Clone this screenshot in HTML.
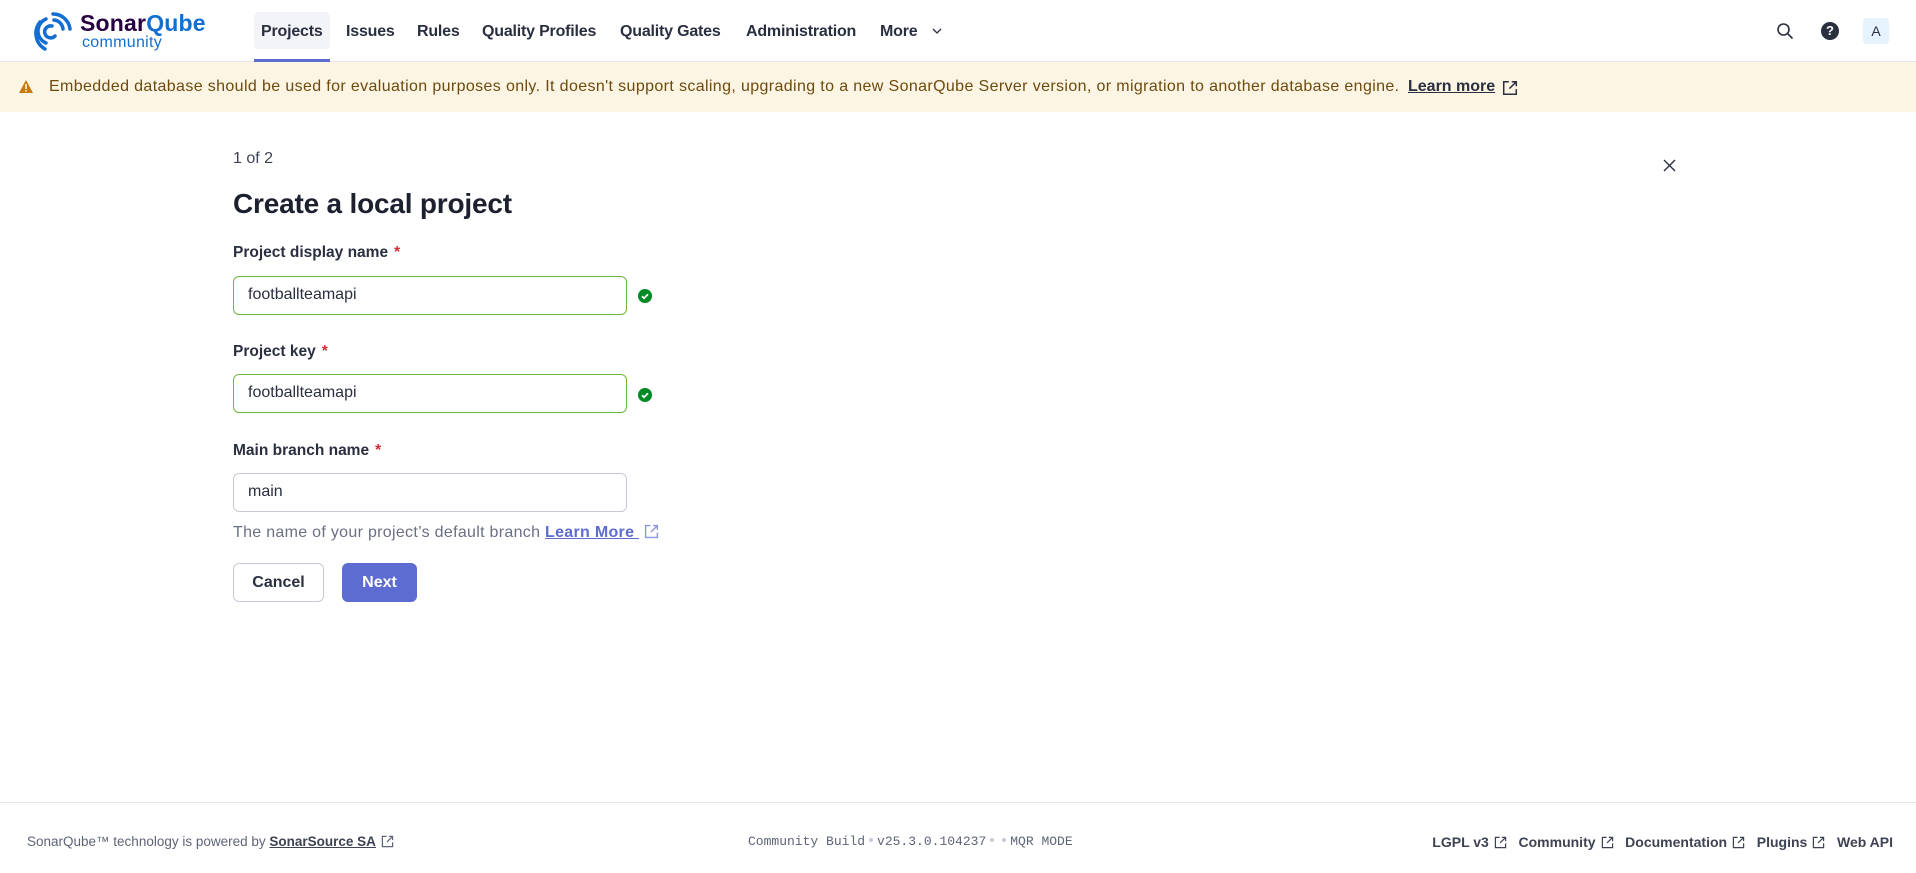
<!DOCTYPE html>
<html><head><meta charset="utf-8"><style>
*{box-sizing:border-box;margin:0;padding:0}
body{width:1916px;height:873px;position:relative;background:#fff;font-family:"Liberation Sans",sans-serif;color:#2a2f40;overflow:hidden}
.abs{position:absolute}
.nav{position:absolute;top:23px;font-size:16px;font-weight:bold;color:#2a2f40;letter-spacing:-0.2px}
.hdr{position:absolute;left:0;top:0;width:1916px;height:62px;border-bottom:1px solid #e1e6f0}
.banner{position:absolute;left:0;top:62px;width:1916px;height:50px;background:#fcf5e4}
.lbl{position:absolute;left:233px;font-size:15.5px;font-weight:bold;color:#2a2f40}
.lbl span{color:#d02f3a;margin-left:6px}
.inp{position:absolute;left:233px;width:394px;height:39px;border:1px solid #6cb83a;border-radius:6px;font-size:16px;padding:9px 0 0 14px;color:#2a2f40}
.chk{position:absolute;left:638px;width:14px;height:14px;border-radius:50%;background:#008a25}
.foot{position:absolute;top:834px;font-size:13.5px;color:#5d6476}
.ext{display:inline-block;width:13px;height:13px;vertical-align:-2px;margin-left:5px}
.dot{display:inline-block;width:4px;height:4px;border-radius:50%;background:#c7cbd9;vertical-align:3px;margin:0 4px}
</style></head><body>
<svg width="0" height="0" style="position:absolute"><defs><symbol id="ex" viewBox="0 0 14 14"><path d="M6 1.5H1.5v11h11V8M8.5 1.5h4v4M12.5 1.5L6.5 7.5" fill="none" stroke="currentColor" stroke-width="1.3"/></symbol></defs></svg>
<div class="hdr"></div>
<svg class="abs" style="left:33px;top:10px" width="42" height="42" viewBox="0 0 42 42" fill="none" stroke="#126ed3" stroke-width="3.5" stroke-linecap="round">
<path d="M19 16a6 6 0 1 0 3 10"/><path d="M13 9a13 13 0 0 0 0 24"/><path d="M7 12a18 18 0 0 0 5 27"/><path d="M20 4a17 17 0 0 1 17 15"/><path d="M21 10a10 10 0 0 1 9 9"/>
</svg>
<div class="abs" style="left:80px;top:10px;font-size:23px;font-weight:bold;letter-spacing:0.2px"><span style="color:#290042">Sonar</span><span style="color:#126ed3">Qube</span></div>
<div class="abs" style="left:82px;top:34px;font-size:16px;color:#126ed3;letter-spacing:0.3px">community</div>
<div class="abs" style="left:254px;top:12px;width:76px;height:37px;background:#f3f4f8;border-radius:4px"></div>
<div class="abs" style="left:254px;top:59px;width:76px;height:3px;background:#5d6cd0"></div>
<div class="nav" style="left:261px">Projects</div>
<div class="nav" style="left:346px">Issues</div>
<div class="nav" style="left:417px">Rules</div>
<div class="nav" style="left:482px">Quality Profiles</div>
<div class="nav" style="left:620px">Quality Gates</div>
<div class="nav" style="left:746px">Administration</div>
<div class="nav" style="left:880px">More</div>
<svg class="abs" style="left:931px;top:27px" width="12" height="8" viewBox="0 0 12 8"><path d="M2 2l4 4 4-4" stroke="#2a2f40" stroke-width="1.3" fill="none"/></svg>
<svg class="abs" style="left:1776px;top:22px" width="18" height="18" viewBox="0 0 18 18" fill="none" stroke="#2a2f40" stroke-width="1.6"><circle cx="7.5" cy="7.5" r="5.5"/><path d="M11.5 11.5l5 5"/></svg>
<div class="abs" style="left:1821px;top:22px;width:18px;height:18px;border-radius:50%;background:#2a2f40;color:#fff;font-size:13px;font-weight:bold;text-align:center;line-height:18px">?</div>
<div class="abs" style="left:1863px;top:18px;width:26px;height:26px;border-radius:4px;background:#e6f2fc;font-size:14px;text-align:center;line-height:26px;color:#2a2f40">A</div>
<div class="banner"></div>
<svg class="abs" style="left:18px;top:79px" width="16" height="15" viewBox="0 0 16 15"><path d="M8 1L15 14H1z" fill="#c47b0c"/><rect x="7.2" y="5" width="1.6" height="5" fill="#fcf5e4"/><rect x="7.2" y="11" width="1.6" height="1.6" fill="#fcf5e4"/></svg>
<div class="abs" style="left:49px;top:78px;font-size:16px;color:#6e4a0d;white-space:nowrap;letter-spacing:0.37px">Embedded database should be used for evaluation purposes only. It doesn't support scaling, upgrading to a new SonarQube Server version, or migration to another database engine.</div>
<div class="abs" style="left:1408px;top:78px;font-size:16px;font-weight:bold;color:#2a2f40;text-decoration:underline">Learn more</div>
<svg class="abs" style="left:1502px;top:80px;color:#2a2f40" width="16" height="16"><use href="#ex"/></svg>
<svg class="abs" style="left:1663px;top:159px" width="13" height="13" viewBox="0 0 13 13"><path d="M1 1l11 11M12 1L1 12" stroke="#2a2f40" stroke-width="1.4"/></svg>
<div class="abs" style="left:233px;top:150px;font-size:16px;color:#3e4354">1 of 2</div>
<div class="abs" style="left:233px;top:188px;font-size:28px;font-weight:bold;color:#1d212f;letter-spacing:-0.2px">Create a local project</div>
<div class="lbl" style="top:244px">Project display name<span>*</span></div>
<div class="inp" style="top:276px">footballteamapi</div>
<div class="chk" style="top:289px"><svg width="14" height="14" viewBox="0 0 14 14"><path d="M4 7.2l2 2 4-4" stroke="#fff" stroke-width="1.8" fill="none"/></svg></div>
<div class="lbl" style="top:343px">Project key<span>*</span></div>
<div class="inp" style="top:374px">footballteamapi</div>
<div class="chk" style="top:388px"><svg width="14" height="14" viewBox="0 0 14 14"><path d="M4 7.2l2 2 4-4" stroke="#fff" stroke-width="1.8" fill="none"/></svg></div>
<div class="lbl" style="top:442px">Main branch name<span>*</span></div>
<div class="inp" style="top:473px;border-color:#c7cbd9">main</div>
<div class="abs" style="left:233px;top:524px;font-size:16px;color:#6a7083;white-space:nowrap;letter-spacing:0.3px">The name of your project’s default branch <span style="color:#5d6cd0;font-weight:bold;text-decoration:underline">Learn More <svg class="ext" style="color:#8c96e0;width:15px;height:15px"><use href="#ex"/></svg></span></div>
<div class="abs" style="left:233px;top:563px;width:91px;height:39px;border:1px solid #c7cbd9;border-radius:6px;font-size:16px;font-weight:bold;text-align:center;line-height:37px;color:#2a2f40">Cancel</div>
<div class="abs" style="left:342px;top:563px;width:75px;height:39px;background:#5d6cd0;border-radius:6px;font-size:16px;font-weight:bold;text-align:center;line-height:39px;color:#fff">Next</div>
<div class="abs" style="left:0;top:802px;width:1916px;height:1px;background:#e5e7ee"></div>
<div class="foot" style="left:27px">SonarQube™ technology is powered by <span style="font-weight:bold;color:#3e4354;text-decoration:underline">SonarSource SA</span><svg class="ext"><use href="#ex"/></svg></div>
<div class="foot" style="left:748px;font-family:'Liberation Mono',monospace;font-size:13px;color:#5d6476;white-space:nowrap">Community Build<span class="dot"></span>v25.3.0.104237<span class="dot"></span><span class="dot"></span>MQR MODE</div>
<div class="foot" style="right:23px;font-weight:bold;color:#3e4354;white-space:nowrap;font-size:14px">LGPL v3<svg class="ext"><use href="#ex"/></svg>&nbsp;&nbsp;&nbsp;Community<svg class="ext"><use href="#ex"/></svg>&nbsp;&nbsp;&nbsp;Documentation<svg class="ext"><use href="#ex"/></svg>&nbsp;&nbsp;&nbsp;Plugins<svg class="ext"><use href="#ex"/></svg>&nbsp;&nbsp;&nbsp;Web API</div>
</body></html>
